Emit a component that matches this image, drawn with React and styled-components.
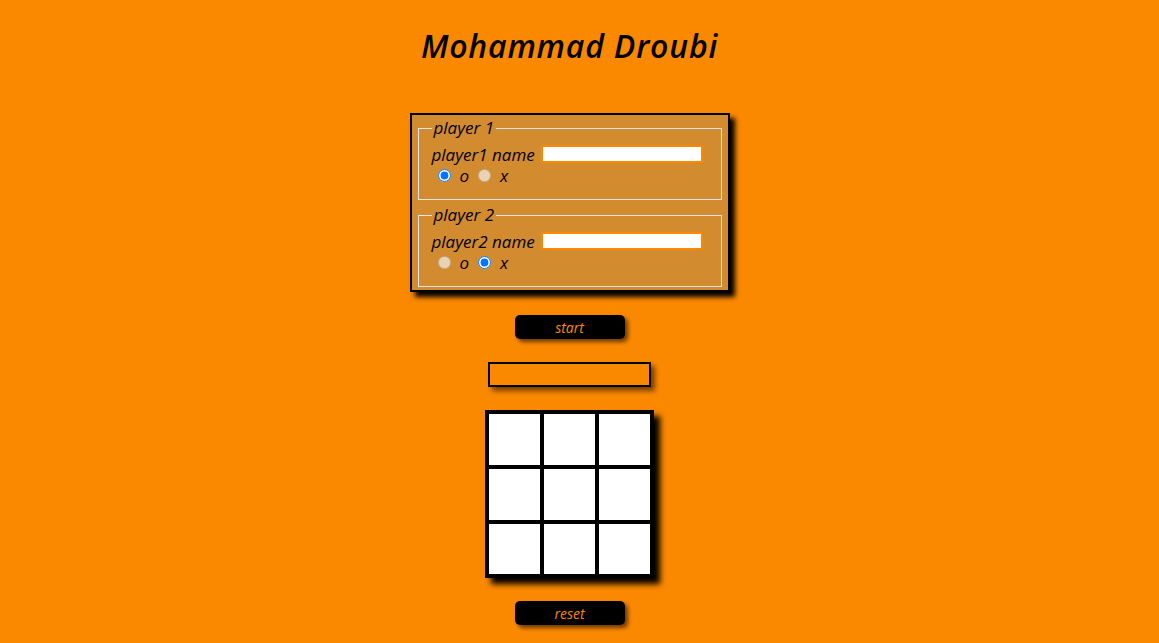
import React from 'react';
import styled, { createGlobalStyle } from 'styled-components';

const GlobalStyle = createGlobalStyle`
    body {
        margin: 0;
        background-color: #fb8900;
        font-family: "Open Sans", "Noto Sans", sans-serif;
        font-style: italic;
    }
`;

const Page = styled.main`
    display: flex;
    flex-direction: column;
    align-items: center;
    padding: 22px 20px 40px 0;
`;

const Title = styled.h1`
    margin: 0 0 43px;
    font-size: 32px;
    font-weight: 600;
    font-style: italic;
    letter-spacing: 0.8px;
    color: #000;
    line-height: 48px;
`;

const Form = styled.form`
    width: 304px;
    padding: 2px 6px 3px;
    background-color: #d38b30;
    border: 2px solid #000;
    box-shadow: 5px 5px 5px #000;
    display: flex;
    flex-direction: column;
    gap: 4px;
`;

const Fieldset = styled.fieldset`
    margin: 0;
    padding: 0 12px 15px 13px;
    border: 1px solid #e4e4ea;
`;

const Legend = styled.legend`
    padding: 0 2px;
    font-size: 17px;
    line-height: 22px;
`;

const Row = styled.div`
    display: flex;
    align-items: center;
    gap: ${props => props.gap ?? "6px"};
    padding-top: ${props => props.top ?? "0"};
    height: ${props => props.height ?? "18px"};
    font-size: 17px;
`;

const NameInput = styled.input`
    width: 158px;
    height: 14px;
    padding: 0;
    border: 2px solid #fb8900;
    background: #fff;
    outline: none;
`;

const Radio = styled.input`
    margin: 0 2px 0 6px;
    width: 13px;
    height: 13px;
`;

const Option = styled.label`
    display: flex;
    align-items: center;
    gap: 7px;
    margin-right: 3px;
`;

const Button = styled.button`
    width: 110px;
    height: 24px;
    margin-top: 23px;
    border: none;
    border-radius: 5px;
    background-color: #000;
    color: #fb8900;
    font-family: inherit;
    font-style: italic;
    font-size: 14px;
    box-shadow: 3px 3px 4px #6b3a00;
    cursor: pointer;
`;

const Status = styled.div`
    width: 159px;
    height: 21px;
    margin-top: 23px;
    border: 2px solid #000;
    background-color: #fb8900;
    box-shadow: 4px 4px 5px #7a4000;
`;

const Board = styled.div`
    display: grid;
    grid-template-columns: repeat(3, 55px);
    grid-template-rows: 55px 55px 54px;
    margin-top: 23px;
    border: 2px solid #000;
    box-shadow: 6px 6px 6px #000;
`;

const Cell = styled.div`
    background-color: #fff;
    border: 2px solid #000;
`;

const PlayerFields = ({ index, mark }) => (
    <Fieldset>
        <Legend>player {index}</Legend>
        <Row top="3px" height="24px">
            <span>player{index} name</span>
            <NameInput type="text" />
        </Row>
        <Row gap="0">
            <Option>
                <Radio type="radio" name={`mark${index}`} defaultChecked={mark === 'o'} disabled={mark !== 'o'} />
                o
            </Option>
            <Option>
                <Radio type="radio" name={`mark${index}`} defaultChecked={mark === 'x'} disabled={mark !== 'x'} />
                x
            </Option>
        </Row>
    </Fieldset>
);

const App = () => (
    <Page>
        <GlobalStyle />
        <Title>Mohammad Droubi</Title>
        <Form>
            <PlayerFields index={1} mark="o" />
            <PlayerFields index={2} mark="x" />
        </Form>
        <Button type="button">start</Button>
        <Status />
        <Board>
            {Array.from({ length: 9 }, (_, i) => <Cell key={i} />)}
        </Board>
        <Button type="button">reset</Button>
    </Page>
);

export default App;
